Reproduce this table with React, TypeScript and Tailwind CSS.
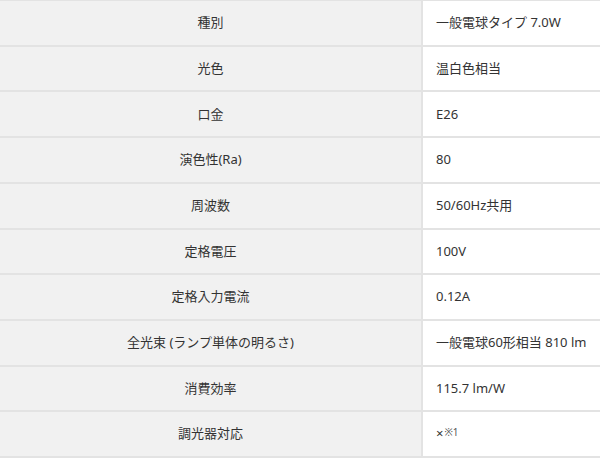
import React from "react";

const rows: [string, React.ReactNode][] = [
  ["種別", "一般電球タイプ 7.0W"],
  ["光色", "温白色相当"],
  ["口金", "E26"],
  ["演色性(Ra)", "80"],
  ["周波数", "50/60Hz共用"],
  ["定格電圧", "100V"],
  ["定格入力電流", "0.12A"],
  ["全光束 (ランプ単体の明るさ)", "一般電球60形相当 810 lm"],
  ["消費効率", "115.7 lm/W"],
  [
    "調光器対応",
    <span>
      ×<sup className="text-[10px] relative -top-[2px] ml-[1px] text-[#555]">※1</sup>
    </span>,
  ],
];

export default function App() {
  return (
    <div
      className="w-[600px] h-[458px] flex flex-col bg-white border-t border-[#e3e3e3] text-[13px] text-[#333333]"
      style={{ fontFamily: '"Noto Sans", "Noto Sans CJK JP", sans-serif' }}
    >
      {rows.map(([k, v], i) => (
        <div key={i} className="flex-1 flex border-b-2 border-[#e3e3e3]">
          <div className="w-[423px] bg-[#f1f1f1] flex items-center justify-center border-r-2 border-[#e3e3e3]">
            {k}
          </div>
          <div className="flex-1 flex items-center pl-[13px]">{v}</div>
        </div>
      ))}
    </div>
  );
}
